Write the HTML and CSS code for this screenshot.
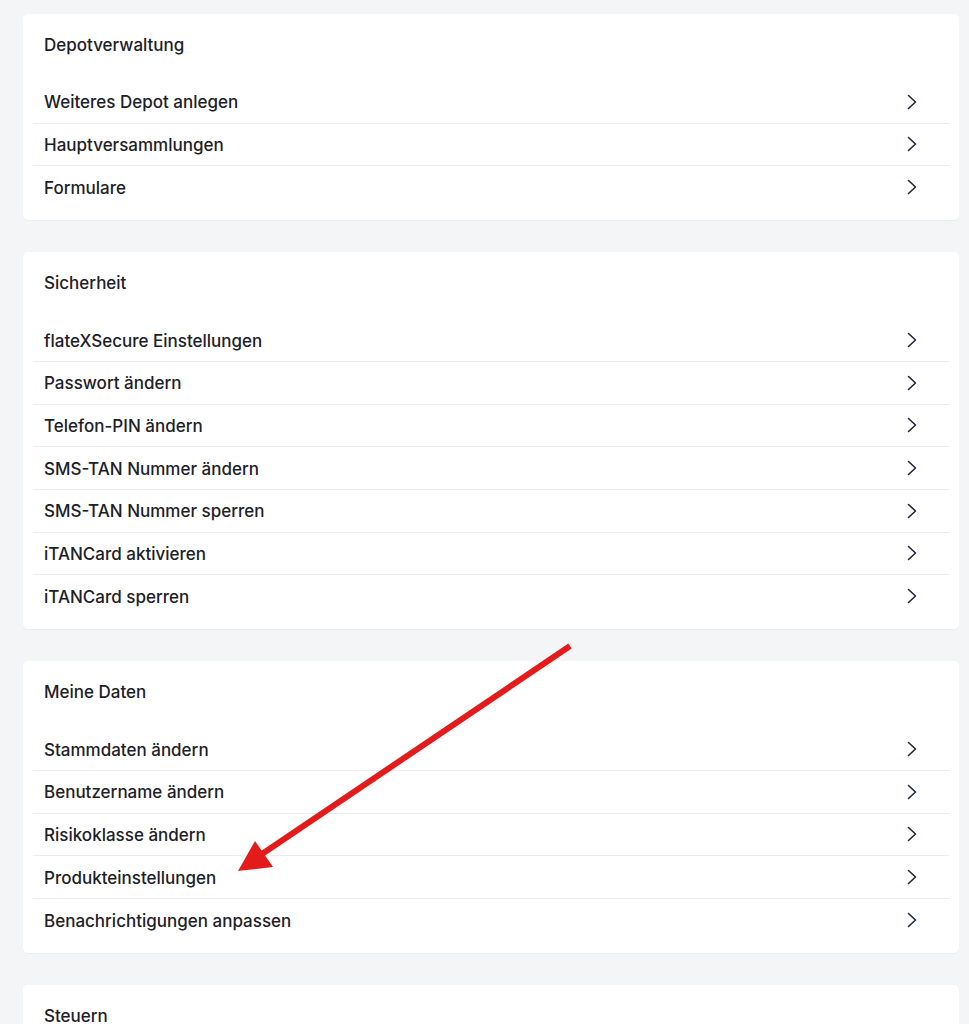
FILE: index.html
```html
<!DOCTYPE html>
<html lang="de">
<head>
<meta charset="utf-8">
<link rel="stylesheet" href="styles.css">
</head>
<body>
<main class="page">
  <section class="card">
    <h2 class="card-title">Depotverwaltung</h2>
    <ul class="list">
      <li class="row"><span>Weiteres Depot anlegen</span><svg class="chev" viewBox="0 0 10 16"><path d="M1.5 1.5 L8.5 8 L1.5 14.5"/></svg></li>
      <li class="row"><span>Hauptversammlungen</span><svg class="chev" viewBox="0 0 10 16"><path d="M1.5 1.5 L8.5 8 L1.5 14.5"/></svg></li>
      <li class="row"><span>Formulare</span><svg class="chev" viewBox="0 0 10 16"><path d="M1.5 1.5 L8.5 8 L1.5 14.5"/></svg></li>
    </ul>
  </section>
  <section class="card">
    <h2 class="card-title">Sicherheit</h2>
    <ul class="list">
      <li class="row"><span>flateXSecure Einstellungen</span><svg class="chev" viewBox="0 0 10 16"><path d="M1.5 1.5 L8.5 8 L1.5 14.5"/></svg></li>
      <li class="row"><span>Passwort ändern</span><svg class="chev" viewBox="0 0 10 16"><path d="M1.5 1.5 L8.5 8 L1.5 14.5"/></svg></li>
      <li class="row"><span>Telefon-PIN ändern</span><svg class="chev" viewBox="0 0 10 16"><path d="M1.5 1.5 L8.5 8 L1.5 14.5"/></svg></li>
      <li class="row"><span>SMS-TAN Nummer ändern</span><svg class="chev" viewBox="0 0 10 16"><path d="M1.5 1.5 L8.5 8 L1.5 14.5"/></svg></li>
      <li class="row"><span>SMS-TAN Nummer sperren</span><svg class="chev" viewBox="0 0 10 16"><path d="M1.5 1.5 L8.5 8 L1.5 14.5"/></svg></li>
      <li class="row"><span>iTANCard aktivieren</span><svg class="chev" viewBox="0 0 10 16"><path d="M1.5 1.5 L8.5 8 L1.5 14.5"/></svg></li>
      <li class="row"><span>iTANCard sperren</span><svg class="chev" viewBox="0 0 10 16"><path d="M1.5 1.5 L8.5 8 L1.5 14.5"/></svg></li>
    </ul>
  </section>
  <section class="card">
    <h2 class="card-title">Meine Daten</h2>
    <ul class="list">
      <li class="row"><span>Stammdaten ändern</span><svg class="chev" viewBox="0 0 10 16"><path d="M1.5 1.5 L8.5 8 L1.5 14.5"/></svg></li>
      <li class="row"><span>Benutzername ändern</span><svg class="chev" viewBox="0 0 10 16"><path d="M1.5 1.5 L8.5 8 L1.5 14.5"/></svg></li>
      <li class="row"><span>Risikoklasse ändern</span><svg class="chev" viewBox="0 0 10 16"><path d="M1.5 1.5 L8.5 8 L1.5 14.5"/></svg></li>
      <li class="row"><span>Produkteinstellungen</span><svg class="chev" viewBox="0 0 10 16"><path d="M1.5 1.5 L8.5 8 L1.5 14.5"/></svg></li>
      <li class="row"><span>Benachrichtigungen anpassen</span><svg class="chev" viewBox="0 0 10 16"><path d="M1.5 1.5 L8.5 8 L1.5 14.5"/></svg></li>
    </ul>
  </section>
  <section class="card card-open">
    <h2 class="card-title">Steuern</h2>
  </section>
</main>
<svg class="annotation" viewBox="0 0 969 1024" aria-hidden="true">
  <line x1="570" y1="646" x2="262" y2="854" stroke="#e31b1b" stroke-width="6"/>
  <polygon points="238,871 255,841 273,867" fill="#e31b1b"/>
</svg>
</body>
</html>
```
FILE: styles.css
```css
html, body {
  margin: 0;
  padding: 0;
  background: #f4f5f7;
  height: 100%;
  overflow: hidden;
}
body {
  font-family: Inter, "Noto Sans", "Liberation Sans", sans-serif;
  color: #1d2128;
  position: relative;
}
.page {
  display: flex;
  flex-direction: column;
  gap: 32px;
  padding: 14px 10px 0 23px;
}
.card {
  background: #ffffff;
  border-radius: 5px;
  padding: 20px 10px 11.6px;
  box-shadow: 0 1px 1px rgba(0, 0, 0, 0.04);
}
.card-open {
  min-height: 80px;
}
.card-title {
  margin: 0;
  padding-left: 11px;
  font-size: 17px;
  font-weight: 500;
  line-height: 22px;
}
.list {
  list-style: none;
  margin: 24.9px 0 0;
  padding: 0;
}
.row {
  box-sizing: border-box;
  height: 42.65px;
  display: flex;
  align-items: center;
  justify-content: space-between;
  padding: 0 32px 0 11px;
  font-size: 17px;
  font-weight: 500;
  border-bottom: 1px solid #ebecee;
}
.row:last-child {
  border-bottom: none;
}
.row span {
  padding-top: 1px;
}
.chev {
  width: 10px;
  height: 16px;
  fill: none;
  stroke: #1f2937;
  stroke-width: 1.6;
  stroke-linecap: round;
  stroke-linejoin: round;
}
.annotation {
  position: absolute;
  left: 0;
  top: 0;
  width: 969px;
  height: 1024px;
  pointer-events: none;
}
```
